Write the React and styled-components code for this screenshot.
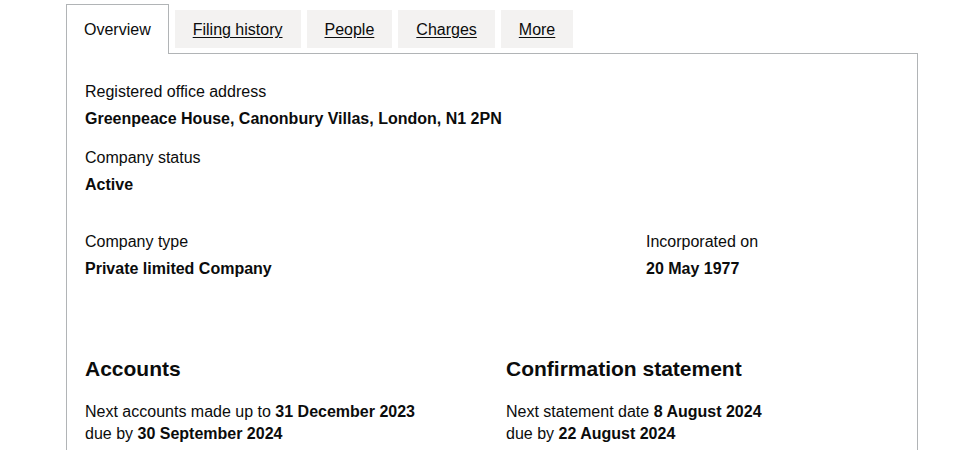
import React from 'react';
import styled, { createGlobalStyle } from 'styled-components';

const Global = createGlobalStyle`
  body {
    margin: 0;
    background: #fff;
    font-family: "Liberation Sans", Arial, sans-serif;
    color: #0b0c0c;
  }
`;

const Page = styled.div`
  padding: 4px 38px 0 66px;
`;

const TabList = styled.ul`
  display: flex;
  align-items: flex-start;
  list-style: none;
  margin: 0;
  padding: 0;
`;

const Tab = styled.li`
  margin-right: 6px;
  margin-top: ${p => (p.selected ? '0' : '6px')};
  margin-bottom: ${p => (p.selected ? '-1px' : '0')};
  background: ${p => (p.selected ? '#fff' : '#f3f2f1')};
  border: ${p => (p.selected ? '1px solid #b1b4b6' : 'none')};
  border-bottom: none;
  height: ${p => (p.selected ? '50px' : '38px')};
  padding: ${p => (p.selected ? '15px 17px 0' : '10px 18px 0')};
  box-sizing: border-box;
  font-size: 16px;
  line-height: 19px;
  position: relative;
  z-index: 1;
`;

const TabLink = styled.a`
  color: #0b0c0c;
  text-decoration: ${p => (p.selected ? 'none' : 'underline')};
  text-underline-offset: 2px;
  cursor: pointer;
`;

const Panel = styled.section`
  border: 1px solid #b1b4b6;
  border-bottom: none;
  padding: 28px 17px 0 18px;
  min-height: 400px;
  box-sizing: border-box;
`;

const Item = styled.dl`
  margin: 0 0 ${p => p.gap || 0}px;
`;

const Label = styled.dt`
  font-size: 16px;
  line-height: 20px;
  margin: 0 0 7px;
`;

const Value = styled.dd`
  margin: 0;
  font-size: 16px;
  line-height: 20px;
  font-weight: bold;
`;

const Row = styled.div`
  display: grid;
  grid-template-columns: ${p => p.cols};
  margin-bottom: ${p => p.gap || 0}px;
`;

const Heading = styled.h2`
  margin: 0 0 19px;
  font-size: 21px;
  line-height: 26px;
  font-weight: bold;
`;

const Text = styled.p`
  margin: 0;
  font-size: 16px;
  line-height: 22px;
  strong { font-weight: bold; }
`;

const tabs = ['Overview', 'Filing history', 'People', 'Charges', 'More'];

export default function App() {
  return (
    <Page>
      <Global />
      <TabList>
        {tabs.map((t, i) => (
          <Tab key={t} selected={i === 0}>
            <TabLink selected={i === 0}>{t}</TabLink>
          </Tab>
        ))}
      </TabList>
      <Panel>
        <Item gap={19}>
          <Label>Registered office address</Label>
          <Value>Greenpeace House, Canonbury Villas, London, N1 2PN</Value>
        </Item>
        <Item gap={37}>
          <Label>Company status</Label>
          <Value>Active</Value>
        </Item>
        <Row cols="561px 1fr" gap={77}>
          <Item>
            <Label>Company type</Label>
            <Value>Private limited Company</Value>
          </Item>
          <Item>
            <Label>Incorporated on</Label>
            <Value>20 May 1977</Value>
          </Item>
        </Row>
        <Row cols="421px 1fr">
          <div>
            <Heading>Accounts</Heading>
            <Text>Next accounts made up to <strong>31 December 2023</strong></Text>
            <Text>due by <strong>30 September 2024</strong></Text>
          </div>
          <div>
            <Heading>Confirmation statement</Heading>
            <Text>Next statement date <strong>8 August 2024</strong></Text>
            <Text>due by <strong>22 August 2024</strong></Text>
          </div>
        </Row>
      </Panel>
    </Page>
  );
}
